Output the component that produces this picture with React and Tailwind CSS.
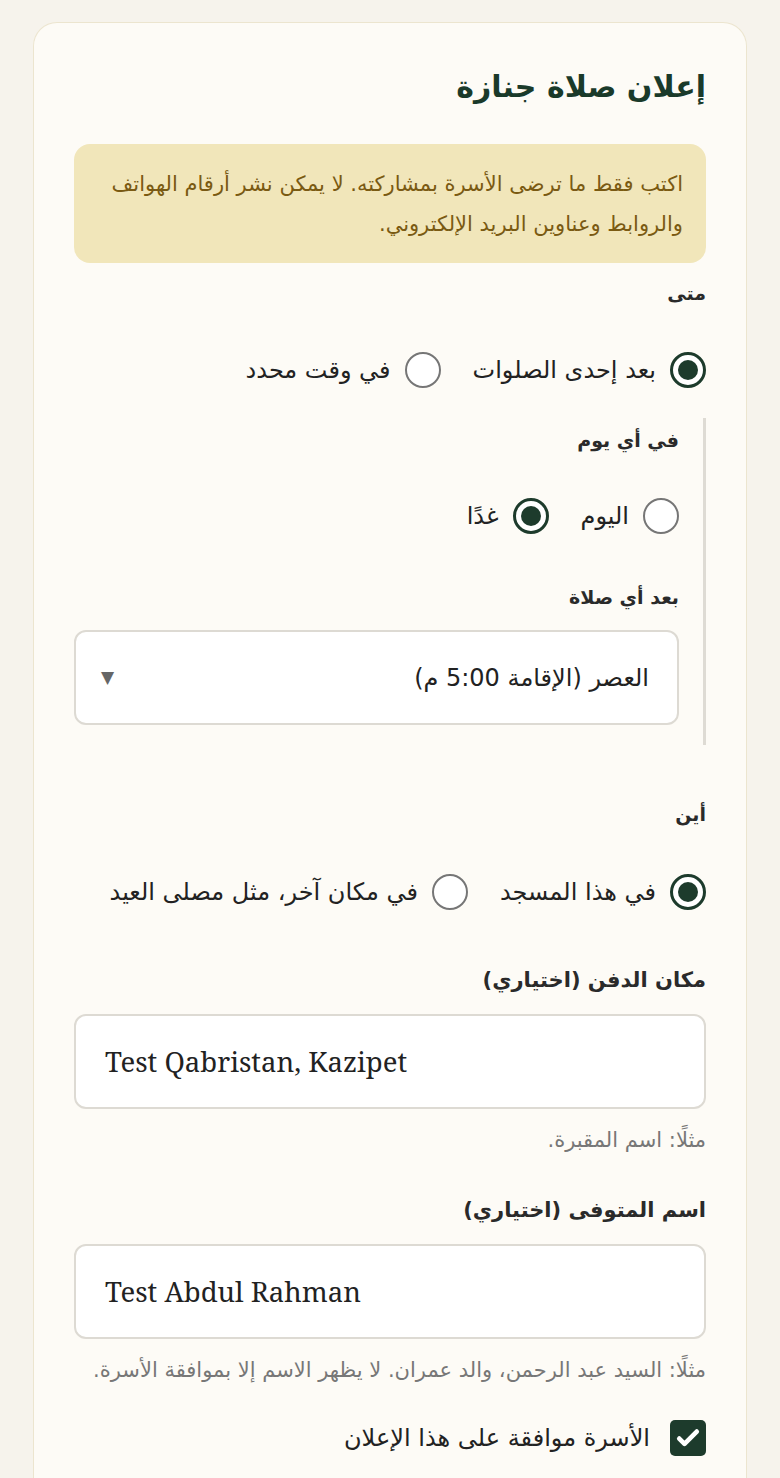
import React from "react";

function Radio({ checked }) {
  return checked ? (
    <span className="flex h-9 w-9 shrink-0 items-center justify-center rounded-full border-[3px] border-[#1d3b2c] bg-white">
      <span className="h-5 w-5 rounded-full bg-[#1d3b2c]" />
    </span>
  ) : (
    <span className="h-9 w-9 shrink-0 rounded-full border-2 border-[#767676] bg-white" />
  );
}

function Option({ checked, label }) {
  return (
    <label className="flex items-center gap-[14px]">
      <Radio checked={checked} />
      <span className="text-[24px] leading-[30px] text-[#222]">{label}</span>
    </label>
  );
}

function Label({ children, className = "" }) {
  return <div className={"font-bold leading-[28px] text-[#2a2a2a] " + className}>{children}</div>;
}

export default function App() {
  return (
    <div className="min-h-screen bg-[#f6f3ec] px-[33px] pt-[22px] font-['DejaVu_Sans','Noto_Sans_Arabic',sans-serif]">
      <div dir="rtl" className="rounded-t-[24px] border border-b-0 border-[#ece5cf] bg-[#fdfbf6] px-10 pt-10 pb-10">
        <h1 className="text-[30px] font-bold leading-[48px] text-[#1a3a2a]">إعلان صلاة جنازة</h1>

        <div className="mt-[33px] rounded-[16px] bg-[#f1e6ba] pr-[23px] pl-5 pt-[20px] pb-[19px] text-[21px] leading-[40px] text-[#7a5a12]">
          اكتب فقط ما ترضى الأسرة بمشاركته. لا يمكن نشر أرقام الهواتف والروابط وعناوين البريد الإلكتروني.
        </div>

        <Label className="mt-4 text-[19px]">متى</Label>
        <div className="mt-[45px] flex items-center gap-8">
          <Option checked label="بعد إحدى الصلوات" />
          <Option label="في وقت محدد" />
        </div>

        <div className="mt-[30px] border-r-[3px] border-[#dedbd4] pr-6 pt-2 pb-5">
          <Label className="text-[19px]">في أي يوم</Label>
          <div className="mt-[44px] flex items-center gap-8">
            <Option label="اليوم" />
            <Option checked label="غدًا" />
          </div>
          <Label className="mt-[49px] text-[19px]">بعد أي صلاة</Label>
          <div className="mt-[19px] flex h-[95px] items-center justify-between rounded-[12px] border-2 border-[#dddad3] bg-white pr-7 pl-[25px]">
            <span className="text-[24px] text-[#222]">العصر (الإقامة 5:00 م)</span>
            <span className="text-[17px] text-[#666]">▼</span>
          </div>
        </div>

        <Label className="mt-[55px] text-[19px]">أين</Label>
        <div className="mt-[46px] flex items-center gap-8">
          <Option checked label="في هذا المسجد" />
          <Option label="في مكان آخر، مثل مصلى العيد" />
        </div>

        <Label className="mt-[56px] text-[21px]">مكان الدفن (اختياري)</Label>
        <div className="mt-[20px] flex h-[95px] items-center rounded-[12px] border-2 border-[#dddad3] bg-white px-[29px]" dir="ltr">
          <span className="font-['Noto_Serif','DejaVu_Serif',serif] text-[27.5px] text-[#222]">Test Qabristan, Kazipet</span>
        </div>
        <div className="mt-[19px] text-[21px] leading-[24px] text-[#777]">مثلًا: اسم المقبرة.</div>

        <Label className="mt-[44px] text-[21px]">اسم المتوفى (اختياري)</Label>
        <div className="mt-[20px] flex h-[95px] items-center rounded-[12px] border-2 border-[#dddad3] bg-white px-[29px]" dir="ltr">
          <span className="font-['Noto_Serif','DejaVu_Serif',serif] text-[27.5px] text-[#222]">Test Abdul Rahman</span>
        </div>
        <div className="mt-[19px] text-[21px] leading-[24px] text-[#777]">مثلًا: السيد عبد الرحمن، والد عمران. لا يظهر الاسم إلا بموافقة الأسرة.</div>

        <label className="mt-[38px] flex items-center gap-[20px]">
          <span className="flex h-9 w-9 shrink-0 items-center justify-center rounded-[5px] bg-[#1d3b2c]">
            <svg width="28" height="28" viewBox="0 0 24 24" fill="none">
              <path d="M4.5 12.5l4.5 4.5L19.5 6.5" stroke="white" strokeWidth="4" strokeLinecap="round" strokeLinejoin="round" />
            </svg>
          </span>
          <span className="text-[24px] leading-[30px] text-[#222]">الأسرة موافقة على هذا الإعلان</span>
        </label>
      </div>
    </div>
  );
}
